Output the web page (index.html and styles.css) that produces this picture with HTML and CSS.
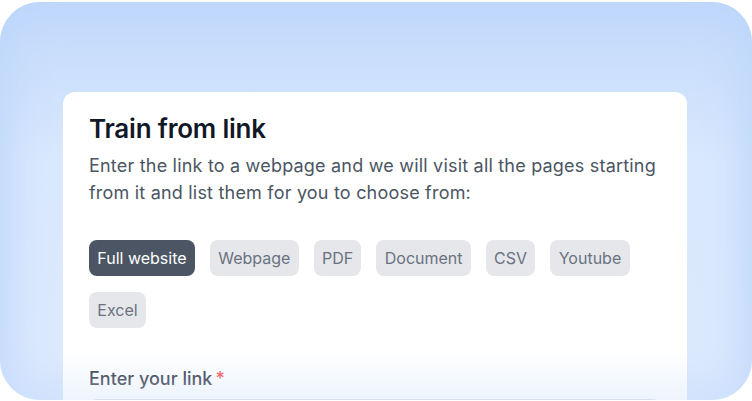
FILE: index.html
```html
<!DOCTYPE html>
<html lang="en">
<head>
<meta charset="utf-8">
<title>Train from link</title>
<link rel="stylesheet" href="styles.css">
</head>
<body>
<div class="frame">
  <div class="card">
    <h1 class="title">Train from link</h1>
    <p class="desc">Enter the link to a webpage and we will visit all the pages starting from it and list them for you to choose from:</p>
    <div class="chips">
      <span class="chip active">Full website</span>
      <span class="chip">Webpage</span>
      <span class="chip">PDF</span>
      <span class="chip">Document</span>
      <span class="chip">CSV</span>
      <span class="chip">Youtube</span>
      <span class="chip">Excel</span>
    </div>
    <label class="label">Enter your link<span class="req">*</span></label>
    <div class="input"></div>
  </div>
  <div class="fade"></div>
</div>
</body>
</html>
```
FILE: styles.css
```css
html, body {
  margin: 0;
  padding: 0;
  background: #ffffff;
  font-family: "Inter", "Noto Sans", sans-serif;
}
body {
  width: 752px;
  height: 401px;
  overflow: hidden;
}
.frame {
  position: relative;
  margin-top: 2px;
  width: 752px;
  height: 398px;
  border-radius: 40px;
  overflow: hidden;
  box-sizing: border-box;
  padding: 90px 65px 0 63px;
  background: linear-gradient(180deg, #c2d9fb 0%, #d9e8fd 40%, #dde9fd 100%);
  box-shadow: inset 0 0 40px 8px #bcd6fb;
}
.card {
  background: #ffffff;
  border-radius: 12px;
  padding: 20px 26px 0 26px;
  height: 400px;
  box-sizing: border-box;
}
.title {
  margin: 0;
  font-size: 26px;
  font-weight: 600;
  color: #111827;
  line-height: 34px;
  letter-spacing: -0.2px;
}
.desc {
  margin: 6px 0 0 0;
  font-size: 18px;
  line-height: 27px;
  color: #4b5563;
  letter-spacing: 0.2px;
  max-width: 580px;
}
.chips {
  display: flex;
  flex-wrap: wrap;
  gap: 16px 15px;
  margin-top: 34px;
  max-width: 560px;
}
.chip {
  display: inline-flex;
  align-items: center;
  height: 36px;
  padding: 0 8.3px;
  border-radius: 8px;
  background: #e5e7eb;
  color: #6b7280;
  font-size: 16px;
  font-weight: 400;
}
.chip.active {
  background: #4b5563;
  color: #ffffff;
}
.label {
  display: block;
  margin-top: 39px;
  font-size: 18px;
  font-weight: 500;
  color: #1f2937;
  line-height: 24px;
}
.req {
  color: #ef4444;
  margin-left: 3px;
}
.input {
  margin-top: 8px;
  height: 44px;
  border: 1px solid #d1d5db;
  border-radius: 8px;
}
.fade {
  position: absolute;
  left: 0;
  right: 0;
  bottom: 0;
  height: 50px;
  background: linear-gradient(180deg, rgba(220,233,253,0) 0%, rgba(220,233,253,0.5) 100%);
  pointer-events: none;
}
```
